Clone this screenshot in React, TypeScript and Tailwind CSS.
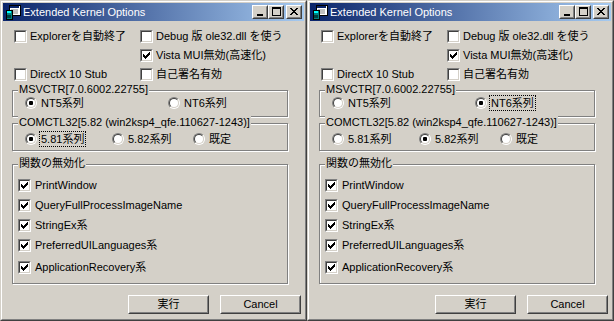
import React from "react";

const FONT = "font-['Liberation_Sans','Noto_Sans_CJK_JP',sans-serif]";

function Check({ checked }: { checked?: boolean }) {
  const starts = [3, 4, 5, 4, 3, 2, 1];
  return (
    <span className="block w-[13px] h-[13px] shrink-0 border border-t-[#808080] border-l-[#808080] border-r-white border-b-white">
      <span className="block w-full h-full bg-white border border-t-[#404040] border-l-[#404040] border-r-[#d4d0c8] border-b-[#d4d0c8]">
        {checked && (
          <svg width="9" height="9" viewBox="0 0 9 9" shapeRendering="crispEdges" className="block">
            {starts.map((y, i) => (
              <rect key={i} x={1 + i} y={y} width={1} height={3} fill="#000" />
            ))}
          </svg>
        )}
      </span>
    </span>
  );
}

function Radio({ on }: { on?: boolean }) {
  return (
    <span className="block w-[12px] h-[12px] shrink-0 rounded-full border border-t-[#808080] border-l-[#808080] border-r-white border-b-white">
      <span className="flex items-center justify-center w-full h-full rounded-full bg-white border border-t-[#404040] border-l-[#404040] border-r-[#d4d0c8] border-b-[#d4d0c8]">
        {on && <span className="block w-[4px] h-[4px] bg-black rounded-[1px]" />}
      </span>
    </span>
  );
}

function CheckItem({ label, checked }: { label: string; checked?: boolean }) {
  return (
    <div className="flex items-center gap-[3px] h-[19px]">
      <Check checked={checked} />
      <span className="leading-[13px] whitespace-nowrap">{label}</span>
    </div>
  );
}

function RadioItem({ label, on, focus }: { label: string; on?: boolean; focus?: boolean }) {
  return (
    <div className="flex items-center gap-[2px]">
      <Radio on={on} />
      <span
        className={
          "leading-[12px] whitespace-nowrap px-[1px] py-[1px] border " +
          (focus ? "border-dotted border-black" : "border-transparent")
        }
      >
        {label}
      </span>
    </div>
  );
}

function Group({ label, className, children }: { label: string; className: string; children: React.ReactNode }) {
  return (
    <div
      className={
        "relative ml-[9px] w-[276px] border border-[#808080] shadow-[1px_1px_0_#fff,inset_1px_1px_0_#fff] " + className
      }
    >
      <span className="absolute left-[5px] -top-[8px] bg-[#d4d0c8] px-[1px] leading-[13px] whitespace-nowrap">
        {label}
      </span>
      {children}
    </div>
  );
}

function CaptionButton({ kind, className = "" }: { kind: "min" | "max" | "close"; className?: string }) {
  return (
    <div
      className={
        "w-[16px] h-[14px] bg-[#d4d0c8] border border-t-white border-l-white border-r-[#404040] border-b-[#404040] " +
        className
      }
    >
      <div className="w-full h-full border border-transparent border-r-[#808080] border-b-[#808080] relative">
        <svg width="12" height="10" viewBox="0 0 12 10" shapeRendering="crispEdges" className="block">
          {kind === "min" && <rect x={3} y={7} width={6} height={2} fill="#000" />}
          {kind === "max" && (
            <>
              <rect x={2} y={0} width={9} height={2} fill="#000" />
              <rect x={2} y={0} width={1} height={9} fill="#000" />
              <rect x={10} y={0} width={1} height={9} fill="#000" />
              <rect x={2} y={8} width={9} height={1} fill="#000" />
            </>
          )}
          {kind === "close" && (
            <>
              {[0, 1, 2, 3, 4, 5, 6].map((i) => (
                <React.Fragment key={i}>
                  <rect x={2 + i} y={1 + i} width={2} height={1} fill="#000" />
                  <rect x={8 - i} y={1 + i} width={2} height={1} fill="#000" />
                </React.Fragment>
              ))}
            </>
          )}
        </svg>
      </div>
    </div>
  );
}

function AppIcon() {
  return (
    <svg width="16" height="16" viewBox="0 0 16 16" shapeRendering="crispEdges" className="block shrink-0">
      <rect x={4} y={1} width={11} height={10} fill="#ffffff" stroke="#000" strokeWidth={1} />
      <rect x={5} y={2} width={9} height={2} fill="#0a246a" />
      <rect x={6} y={5} width={7} height={5} fill="#c0c0c0" />
      <rect x={1} y={6} width={6} height={9} fill="#008080" stroke="#000" strokeWidth={1} />
      <rect x={2} y={7} width={4} height={2} fill="#00ffff" />
      <rect x={2} y={11} width={4} height={3} fill="#004040" />
    </svg>
  );
}

function PushButton({ label }: { label: string }) {
  return (
    <div className="w-[81px] h-[19px] bg-[#d4d0c8] border border-t-white border-l-white border-r-[#404040] border-b-[#404040]">
      <div className="flex items-center justify-center w-full h-full border border-transparent border-r-[#808080] border-b-[#808080] leading-[13px]">
        {label}
      </div>
    </div>
  );
}

function Win({ msv, com, focusGroup }: { msv: number; com: number; focusGroup: number }) {
  return (
    <div className="w-[307px] h-[321px] shrink-0 bg-[#d4d0c8] border border-t-[#d4d0c8] border-l-[#d4d0c8] border-r-[#404040] border-b-[#404040]">
      <div className="h-full flex flex-col p-px border border-t-white border-l-white border-r-[#808080] border-b-[#808080]">
        {/* title bar */}
        <div className="h-[18px] shrink-0 flex items-center bg-[linear-gradient(to_right,#0a246a,#a6caf0)] pr-[2px]">
          <div className="ml-[2px]">
            <AppIcon />
          </div>
          <span className="ml-[2px] text-white text-[11px] leading-[13px] whitespace-nowrap">
            Extended Kernel Options
          </span>
          <div className="ml-auto flex items-center">
            <CaptionButton kind="min" />
            <CaptionButton kind="max" />
            <CaptionButton kind="close" className="ml-[2px]" />
          </div>
        </div>

        {/* client */}
        <div className="flex-1 flex flex-col text-[11px] text-black">
          <div className="pt-[6px] pl-[11px] grid grid-cols-[126px_1fr]">
            <CheckItem label="Explorerを自動終了" />
            <CheckItem label="Debug 版 ole32.dll を使う" />
            <div className="h-[19px]" />
            <CheckItem label="Vista MUI無効(高速化)" checked />
            <CheckItem label="DirectX 10 Stub" />
            <CheckItem label="自己署名有効" />
          </div>

          <Group label="MSVCTR[7.0.6002.22755]" className="mt-[6px] h-[27px]">
            <div className="grid grid-cols-[143px_1fr] pl-[12px] pt-[4px]">
              <RadioItem label="NT5系列" on={msv === 0} focus={focusGroup === 0 && msv === 0} />
              <RadioItem label="NT6系列" on={msv === 1} focus={focusGroup === 0 && msv === 1} />
            </div>
          </Group>

          <Group label="COMCTL32[5.82 (win2ksp4_qfe.110627-1243)]" className="mt-[6px] h-[28px]">
            <div className="grid grid-cols-[87px_81px_1fr] pl-[12px] pt-[7px]">
              <RadioItem label="5.81系列" on={com === 0} focus={focusGroup === 1 && com === 0} />
              <RadioItem label="5.82系列" on={com === 1} focus={focusGroup === 1 && com === 1} />
              <RadioItem label="既定" on={com === 2} focus={focusGroup === 1 && com === 2} />
            </div>
          </Group>

          <Group label="関数の無効化" className="mt-[13px] h-[120px]">
            <div className="flex flex-col pl-[5px] pt-[10px] [&>div]:h-[20px] [&>div]:gap-[4px]">
              <CheckItem label="PrintWindow" checked />
              <CheckItem label="QueryFullProcessImageName" checked />
              <CheckItem label="StringEx系" checked />
              <CheckItem label="PreferredUILanguages系" checked />
              <div className="mt-[2px] flex items-center">
                <Check checked />
                <span className="leading-[13px] whitespace-nowrap">ApplicationRecovery系</span>
              </div>
            </div>
          </Group>

          <div className="mt-[11px] flex justify-end gap-[11px] pr-[3px]">
            <PushButton label="実行" />
            <PushButton label="Cancel" />
          </div>
        </div>
      </div>
    </div>
  );
}

export default function App() {
  return (
    <div className={"flex w-[614px] h-[321px] overflow-hidden bg-[#d4d0c8] " + FONT}>
      <Win msv={0} com={0} focusGroup={1} />
      <Win msv={1} com={1} focusGroup={0} />
    </div>
  );
}
